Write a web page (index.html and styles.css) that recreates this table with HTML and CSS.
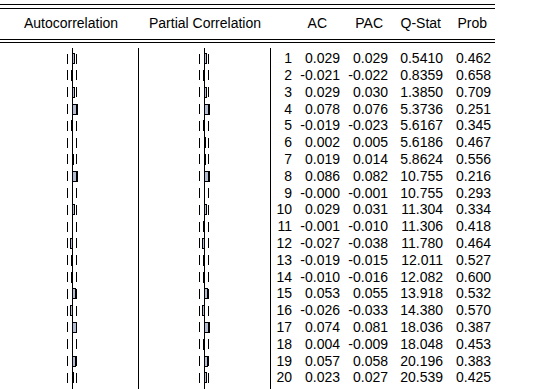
FILE: index.html
```html
<!DOCTYPE html>
<html>
<head>
<meta charset="utf-8">
<title>Correlogram</title>
<link rel="stylesheet" href="styles.css">
</head>
<body>
<div class="correlogram">
  <div class="rule-top"></div>
  <div class="head">
    <span class="h-plot h-auto">Autocorrelation</span>
    <span class="h-plot h-partial">Partial Correlation</span>
    <span></span>
    <span class="h-num h-ac">AC</span>
    <span class="h-num h-pac">PAC</span>
    <span class="h-num h-q">Q-Stat</span>
    <span class="h-num h-prob">Prob</span>
  </div>
  <div class="rule-bot"></div>
  <div class="lines">
    <div class="row"><div class="plot auto"><i class="axis"><b class="bar pos" style="width:3px"></b></i></div><div class="plot partial"><i class="axis"><b class="bar pos" style="width:3px"></b></i></div><span class="num">1</span><span class="num">0.029</span><span class="num">0.029</span><span class="num">0.5410</span><span class="num">0.462</span></div>
    <div class="row"><div class="plot auto"><i class="axis"><b class="bar neg" style="width:2px"></b></i></div><div class="plot partial"><i class="axis"><b class="bar neg" style="width:2px"></b></i></div><span class="num">2</span><span class="num">-0.021</span><span class="num">-0.022</span><span class="num">0.8359</span><span class="num">0.658</span></div>
    <div class="row"><div class="plot auto"><i class="axis"><b class="bar pos" style="width:3px"></b></i></div><div class="plot partial"><i class="axis"><b class="bar pos" style="width:3px"></b></i></div><span class="num">3</span><span class="num">0.029</span><span class="num">0.030</span><span class="num">1.3850</span><span class="num">0.709</span></div>
    <div class="row"><div class="plot auto"><i class="axis"><b class="bar pos" style="width:6px"></b></i></div><div class="plot partial"><i class="axis"><b class="bar pos" style="width:6px"></b></i></div><span class="num">4</span><span class="num">0.078</span><span class="num">0.076</span><span class="num">5.3736</span><span class="num">0.251</span></div>
    <div class="row"><div class="plot auto"><i class="axis"><b class="bar neg" style="width:2px"></b></i></div><div class="plot partial"><i class="axis"><b class="bar neg" style="width:2px"></b></i></div><span class="num">5</span><span class="num">-0.019</span><span class="num">-0.023</span><span class="num">5.6167</span><span class="num">0.345</span></div>
    <div class="row"><div class="plot auto"><i class="axis"></i></div><div class="plot partial"><i class="axis"><b class="bar pos" style="width:2px"></b></i></div><span class="num">6</span><span class="num">0.002</span><span class="num">0.005</span><span class="num">5.6186</span><span class="num">0.467</span></div>
    <div class="row"><div class="plot auto"><i class="axis"><b class="bar pos" style="width:2px"></b></i></div><div class="plot partial"><i class="axis"><b class="bar pos" style="width:2px"></b></i></div><span class="num">7</span><span class="num">0.019</span><span class="num">0.014</span><span class="num">5.8624</span><span class="num">0.556</span></div>
    <div class="row"><div class="plot auto"><i class="axis"><b class="bar pos" style="width:6px"></b></i></div><div class="plot partial"><i class="axis"><b class="bar pos" style="width:6px"></b></i></div><span class="num">8</span><span class="num">0.086</span><span class="num">0.082</span><span class="num">10.755</span><span class="num">0.216</span></div>
    <div class="row"><div class="plot auto"><i class="axis"></i></div><div class="plot partial"><i class="axis"></i></div><span class="num">9</span><span class="num">-0.000</span><span class="num">-0.001</span><span class="num">10.755</span><span class="num">0.293</span></div>
    <div class="row"><div class="plot auto"><i class="axis"><b class="bar pos" style="width:3px"></b></i></div><div class="plot partial"><i class="axis"><b class="bar pos" style="width:3px"></b></i></div><span class="num">10</span><span class="num">0.029</span><span class="num">0.031</span><span class="num">11.304</span><span class="num">0.334</span></div>
    <div class="row"><div class="plot auto"><i class="axis"></i></div><div class="plot partial"><i class="axis"><b class="bar neg" style="width:2px"></b></i></div><span class="num">11</span><span class="num">-0.001</span><span class="num">-0.010</span><span class="num">11.306</span><span class="num">0.418</span></div>
    <div class="row"><div class="plot auto"><i class="axis"><b class="bar neg" style="width:3px"></b></i></div><div class="plot partial"><i class="axis"><b class="bar neg" style="width:3px"></b></i></div><span class="num">12</span><span class="num">-0.027</span><span class="num">-0.038</span><span class="num">11.780</span><span class="num">0.464</span></div>
    <div class="row"><div class="plot auto"><i class="axis"><b class="bar neg" style="width:2px"></b></i></div><div class="plot partial"><i class="axis"><b class="bar neg" style="width:2px"></b></i></div><span class="num">13</span><span class="num">-0.019</span><span class="num">-0.015</span><span class="num">12.011</span><span class="num">0.527</span></div>
    <div class="row"><div class="plot auto"><i class="axis"><b class="bar neg" style="width:2px"></b></i></div><div class="plot partial"><i class="axis"><b class="bar neg" style="width:2px"></b></i></div><span class="num">14</span><span class="num">-0.010</span><span class="num">-0.016</span><span class="num">12.082</span><span class="num">0.600</span></div>
    <div class="row"><div class="plot auto"><i class="axis"><b class="bar pos" style="width:4px"></b></i></div><div class="plot partial"><i class="axis"><b class="bar pos" style="width:4px"></b></i></div><span class="num">15</span><span class="num">0.053</span><span class="num">0.055</span><span class="num">13.918</span><span class="num">0.532</span></div>
    <div class="row"><div class="plot auto"><i class="axis"><b class="bar neg" style="width:3px"></b></i></div><div class="plot partial"><i class="axis"><b class="bar neg" style="width:3px"></b></i></div><span class="num">16</span><span class="num">-0.026</span><span class="num">-0.033</span><span class="num">14.380</span><span class="num">0.570</span></div>
    <div class="row"><div class="plot auto"><i class="axis"><b class="bar pos" style="width:5px"></b></i></div><div class="plot partial"><i class="axis"><b class="bar pos" style="width:6px"></b></i></div><span class="num">17</span><span class="num">0.074</span><span class="num">0.081</span><span class="num">18.036</span><span class="num">0.387</span></div>
    <div class="row"><div class="plot auto"><i class="axis"></i></div><div class="plot partial"><i class="axis"><b class="bar neg" style="width:2px"></b></i></div><span class="num">18</span><span class="num">0.004</span><span class="num">-0.009</span><span class="num">18.048</span><span class="num">0.453</span></div>
    <div class="row"><div class="plot auto"><i class="axis"><b class="bar pos" style="width:4px"></b></i></div><div class="plot partial"><i class="axis"><b class="bar pos" style="width:4px"></b></i></div><span class="num">19</span><span class="num">0.057</span><span class="num">0.058</span><span class="num">20.196</span><span class="num">0.383</span></div>
    <div class="row"><div class="plot auto"><i class="axis"><b class="bar pos" style="width:2px"></b></i></div><div class="plot partial"><i class="axis"><b class="bar pos" style="width:3px"></b></i></div><span class="num">20</span><span class="num">0.023</span><span class="num">0.027</span><span class="num">20.539</span><span class="num">0.425</span></div>
  </div>
</div>
</body>
</html>
```
FILE: styles.css
```css
* { box-sizing: border-box; }

body {
  margin: 0;
  background: #fff;
  color: #000;
  font-family: "Liberation Sans", Arial, sans-serif;
  font-size: 14px;
}

.correlogram { width: 495px; }

.rule-top {
  margin-top: 4px;
  height: 5px;
  border-top: 1px solid #000;
  border-bottom: 1px solid #000;
}

.rule-bot {
  height: 4px;
  border-top: 1px solid #000;
  border-bottom: 1px solid #000;
}

.head,
.row {
  display: grid;
  grid-template-columns: 139px 132px 21px 48px 48px 55px 48px;
}

.head {
  height: 30px;
  line-height: 29px;
  white-space: nowrap;
}

.h-plot { text-align: center; }
.h-auto { padding-left: 3px; }
.h-num { text-align: right; }
.h-ac { padding-right: 13px; }
.h-pac { padding-right: 5px; }
.h-q { padding-right: 2px; }
.h-prob { padding-right: 4px; }

.lines {
  margin-top: 5px;
  padding: 2.3px 0 6px;
  background:
    linear-gradient(#000, #000) 72px 0 / 1px 100% no-repeat,
    linear-gradient(#000, #000) 138px 0 / 1px 100% no-repeat,
    linear-gradient(#000, #000) 204px 0 / 1px 100% no-repeat,
    linear-gradient(#000, #000) 270px 0 / 1px 100% no-repeat;
}

.row {
  height: 16.8px;
  line-height: 16.8px;
}

.num { text-align: right; white-space: nowrap; }

.plot { position: relative; }

.axis {
  position: absolute;
  top: 0;
  height: 100%;
  width: 1px;
}
.auto .axis { left: 72px; }
.partial .axis { left: 65px; }

.axis::before,
.axis::after {
  content: "";
  position: absolute;
  top: 3.4px;
  width: 1px;
  height: 10px;
  background: #000;
}
.axis::before { left: -5px; }
.axis::after { left: 4px; }

.bar {
  position: absolute;
  top: 2.9px;
  height: 11px;
  border: 1px solid #000;
  background: #b4bcd2;
}
.bar.pos { left: 0; }
.bar.neg { right: 0; }
```
